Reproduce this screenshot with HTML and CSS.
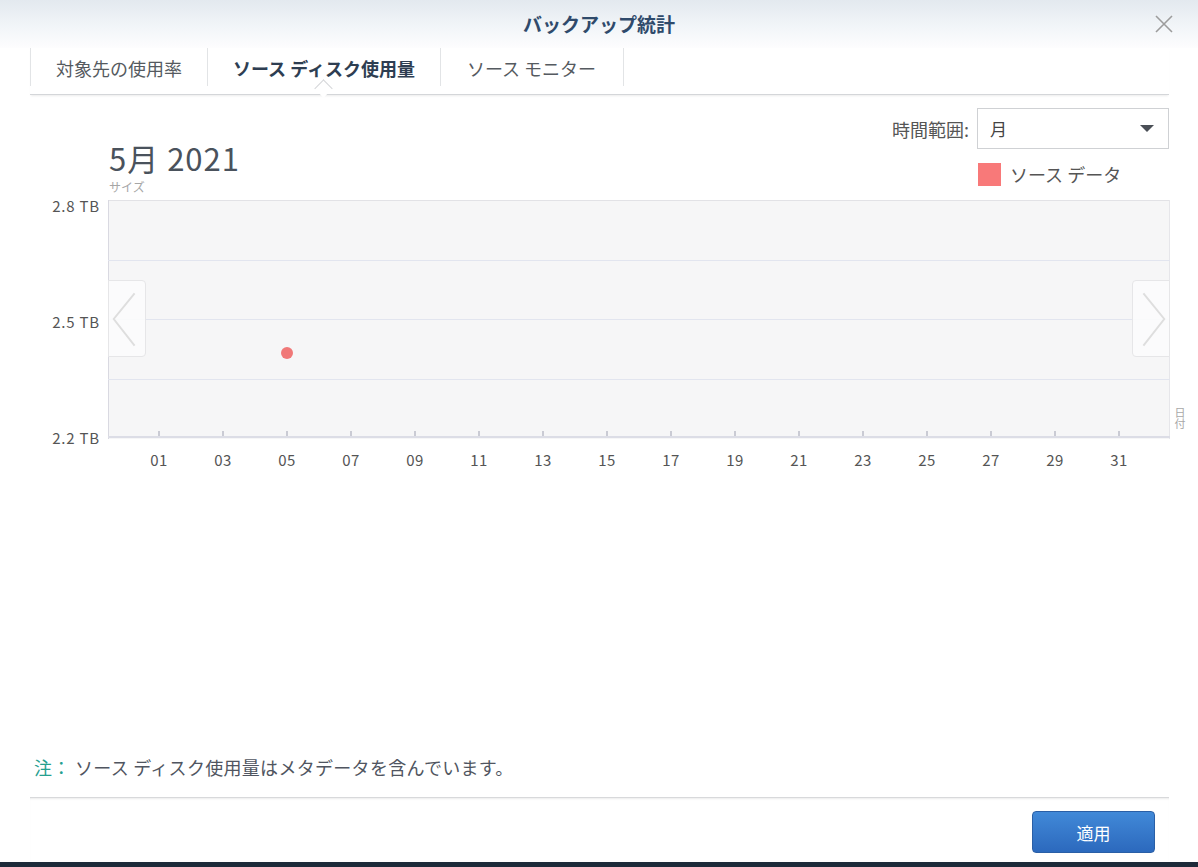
FILE: index.html
```html
<!DOCTYPE html>
<html lang="ja">
<head>
<meta charset="utf-8">
<title>バックアップ統計</title>
<link rel="stylesheet" href="styles.css">
</head>
<body>
<div class="dialog">
  <header class="titlebar">
    <h1 class="title">バックアップ統計</h1>
    <button class="close" aria-label="閉じる">
      <svg width="20" height="20" viewBox="0 0 20 20"><path d="M2 2 L18 18 M18 2 L2 18" stroke="#9c9c9c" stroke-width="1.6" fill="none"/></svg>
    </button>
  </header>

  <nav class="tabs">
    <div class="tab">対象先の使用率</div>
    <div class="tab active">ソース ディスク使用量</div>
    <div class="tab">ソース モニター</div>
  </nav>

  <main class="body">
    <div class="chart-head">
      <div class="period">
        <div class="period-title">5月 2021</div>
        <div class="axis-name">サイズ</div>
      </div>
      <div class="controls">
        <div class="range">
          <span class="range-label">時間範囲:</span>
          <div class="select"><span>月</span><span class="caret"></span></div>
        </div>
        <div class="legend"><span class="swatch"></span><span>ソース データ</span></div>
      </div>
    </div>

    <div class="chart">
      <div class="y-labels">
        <span>2.8 TB</span>
        <span>2.5 TB</span>
        <span>2.2 TB</span>
      </div>
      <div class="plot">
        <svg class="plot-svg" width="1062" height="239" viewBox="0 0 1062 239">
          <rect x="0" y="0" width="1062" height="239" fill="#f6f6f7"/>
          <line x1="0" y1="0.5" x2="1062" y2="0.5" stroke="#e2e2e6"/>
          <line x1="0.5" y1="0" x2="0.5" y2="239" stroke="#d9d9e1"/>
          <line x1="1061.5" y1="0" x2="1061.5" y2="239" stroke="#e6e6ea"/>
          <line x1="0" y1="60.5" x2="1062" y2="60.5" stroke="#e2e5ef"/>
          <line x1="0" y1="119.5" x2="1062" y2="119.5" stroke="#e2e5ef"/>
          <line x1="0" y1="179.5" x2="1062" y2="179.5" stroke="#e2e5ef"/>
          <line x1="0" y1="237" x2="1062" y2="237" stroke="#dcdde6" stroke-width="2"/>
          <g stroke="#cacbd4" stroke-width="2">
            <line x1="51" y1="231" x2="51" y2="236"/>
            <line x1="115" y1="231" x2="115" y2="236"/>
            <line x1="179" y1="231" x2="179" y2="236"/>
            <line x1="243" y1="231" x2="243" y2="236"/>
            <line x1="307" y1="231" x2="307" y2="236"/>
            <line x1="371" y1="231" x2="371" y2="236"/>
            <line x1="435" y1="231" x2="435" y2="236"/>
            <line x1="499" y1="231" x2="499" y2="236"/>
            <line x1="563" y1="231" x2="563" y2="236"/>
            <line x1="627" y1="231" x2="627" y2="236"/>
            <line x1="691" y1="231" x2="691" y2="236"/>
            <line x1="755" y1="231" x2="755" y2="236"/>
            <line x1="819" y1="231" x2="819" y2="236"/>
            <line x1="883" y1="231" x2="883" y2="236"/>
            <line x1="947" y1="231" x2="947" y2="236"/>
            <line x1="1011" y1="231" x2="1011" y2="236"/>
          </g>
          <circle cx="179" cy="153" r="6" fill="#f07878"/>
        </svg>
        <button class="nav nav-prev" aria-label="前へ">
          <svg width="38" height="77" viewBox="0 0 38 77"><path d="M27 11 L5 38 L27 66" stroke="#dedede" stroke-width="2" fill="none"/></svg>
        </button>
        <button class="nav nav-next" aria-label="次へ">
          <svg width="38" height="77" viewBox="0 0 38 77"><path d="M11 11 L33 38 L11 66" stroke="#dedede" stroke-width="2" fill="none"/></svg>
        </button>
      </div>
      <div class="x-name">日付</div>
    </div>

    <div class="x-labels">
      <span>01</span><span>03</span><span>05</span><span>07</span>
      <span>09</span><span>11</span><span>13</span><span>15</span>
      <span>17</span><span>19</span><span>21</span><span>23</span>
      <span>25</span><span>27</span><span>29</span><span>31</span>
    </div>
  </main>

  <p class="note"><span class="note-label">注：</span> ソース ディスク使用量はメタデータを含んでいます。</p>

  <footer class="footer">
    <button class="apply">適用</button>
  </footer>
</div>
</body>
</html>
```

FILE: styles.css
```css
* { box-sizing: border-box; }

html, body {
  margin: 0;
  padding: 0;
}

body {
  width: 1198px;
  height: 867px;
  background: #1d2b3a;
  font-family: "Noto Sans CJK JP", sans-serif;
  color: #555;
  overflow: hidden;
}

.dialog {
  height: 862px;
  background: #fff;
  display: flex;
  flex-direction: column;
}

/* title bar */
.titlebar {
  height: 48px;
  flex: none;
  background: linear-gradient(to bottom, #e3e9ef 0%, #f3f6f9 60%, #fdfdfe 100%);
  display: flex;
  align-items: center;
  justify-content: center;
  position: relative;
}

.title {
  margin: 0;
  font-size: 19px;
  font-weight: 700;
  color: #2f4a6b;
  line-height: 48px;
}

.close {
  position: absolute;
  right: 24px;
  top: 14px;
  width: 20px;
  height: 20px;
  padding: 0;
  border: 0;
  background: none;
  display: flex;
}

/* tabs */
.tabs {
  flex: none;
  height: 47px;
  margin: 0 29px 0 30px;
  display: flex;
  align-items: flex-start;
  border-bottom: 1px solid #d4d6d9;
  box-shadow: 0 2px 2px -1px rgba(0, 0, 0, 0.08);
  position: relative;
}

.tab {
  height: 38px;
  padding: 2px 25px 0 25px;
  display: flex;
  align-items: center;
  font-size: 18px;
  color: #555a60;
  border-right: 1px solid #e2e4e6;
  position: relative;
  white-space: nowrap;
}

.tab:first-child {
  border-left: 1px solid #e2e4e6;
}

.tab:nth-child(3) {
  padding-right: 27px;
  padding-left: 26px;
}

.tab.active {
  font-weight: 700;
  color: #2e3e52;
}

.tab.active::after {
  content: "";
  position: absolute;
  left: 50%;
  bottom: -9px;
  width: 12px;
  height: 12px;
  margin-left: -7px;
  background: #fff;
  border-left: 1px solid #d4d6d9;
  border-top: 1px solid #d4d6d9;
  transform: rotate(45deg);
  transform-origin: center;
}

/* body */
.body {
  flex: 1;
  display: flex;
  flex-direction: column;
  padding-top: 13px;
}

.chart-head {
  height: 92px;
  display: flex;
  justify-content: space-between;
  padding: 0 29px 0 109px;
}

.period {
  padding-top: 33px;
}

.period-title {
  font-size: 31px;
  line-height: 34px;
  color: #4a525c;
  letter-spacing: 1px;
}

.axis-name {
  font-size: 12px;
  line-height: 16px;
  color: #a6a6a6;
  margin-top: 4px;
}

.controls {
  display: flex;
  flex-direction: column;
  align-items: flex-end;
}

.range {
  display: flex;
  align-items: center;
  gap: 8px;
}

.range-label {
  font-size: 18px;
  color: #555;
}

.select {
  width: 192px;
  height: 41px;
  border: 1px solid #cfd1d4;
  display: flex;
  align-items: center;
  justify-content: space-between;
  padding: 0 14px 0 12px;
  font-size: 17px;
  color: #444;
  background: #fff;
}

.caret {
  width: 0;
  height: 0;
  border-left: 7px solid transparent;
  border-right: 7px solid transparent;
  border-top: 7px solid #4a4f56;
}

.legend {
  width: 192px;
  display: flex;
  align-items: center;
  gap: 9px;
  margin-top: 14px;
  padding-left: 1px;
  font-size: 18px;
  color: #555;
  line-height: 23px;
}

.swatch {
  width: 23px;
  height: 23px;
  background: #f87979;
}

/* chart */
.chart {
  height: 239px;
  display: flex;
  align-items: flex-start;
}

.y-labels {
  width: 100px;
  height: 246px;
  margin-top: -2px;
  margin-right: 8px;
  display: flex;
  flex-direction: column;
  justify-content: space-between;
  align-items: flex-end;
  font-size: 15px;
  line-height: 16px;
  letter-spacing: 0.8px;
  color: #555;
}

.y-labels span:last-child {
  margin-bottom: -2px;
}

.plot {
  width: 1062px;
  height: 239px;
  position: relative;
  flex: none;
}

.plot-svg {
  display: block;
}

.nav {
  position: absolute;
  top: 80px;
  width: 38px;
  height: 77px;
  padding: 0;
  background: rgba(252, 252, 252, 0.9);
  border: 1px solid #e6e6e8;
  display: flex;
}

.nav svg { display: block; }

.nav-prev {
  left: 0;
  border-radius: 0 4px 4px 0;
}

.nav-next {
  right: 0;
  border-radius: 4px 0 0 4px;
}

.x-name {
  writing-mode: vertical-rl;
  font-size: 11px;
  color: #a8a8a8;
  align-self: flex-end;
  margin: 0 0 10px 4px;
  line-height: 12px;
}

.x-labels {
  display: grid;
  grid-template-columns: repeat(16, 64px);
  padding-left: 127px;
  margin-top: 11px;
  font-size: 15px;
  line-height: 20px;
  letter-spacing: 0.5px;
  color: #555;
  text-align: center;
}

/* note */
.note {
  flex: none;
  margin: 0 0 19px 34px;
  font-size: 18px;
  line-height: 22px;
  letter-spacing: 0.3px;
  color: #505560;
}

.note-label {
  color: #26a08f;
}

/* footer */
.footer {
  flex: none;
  height: 65px;
  margin: 0 29px 0 30px;
  border-top: 1px solid #d8d9db;
  box-shadow: inset 0 2px 2px -1px rgba(0, 0, 0, 0.08);
  display: flex;
  justify-content: flex-end;
  align-items: flex-start;
  padding: 13px 14px 0 0;
}

.apply {
  width: 123px;
  height: 42px;
  border: 1px solid #2a5fa6;
  border-radius: 4px;
  background: linear-gradient(to bottom, #4189d8 0%, #2c69bd 100%);
  color: #fff;
  font-family: "Noto Sans CJK JP", sans-serif;
  font-size: 17px;
  padding: 0;
}
```
